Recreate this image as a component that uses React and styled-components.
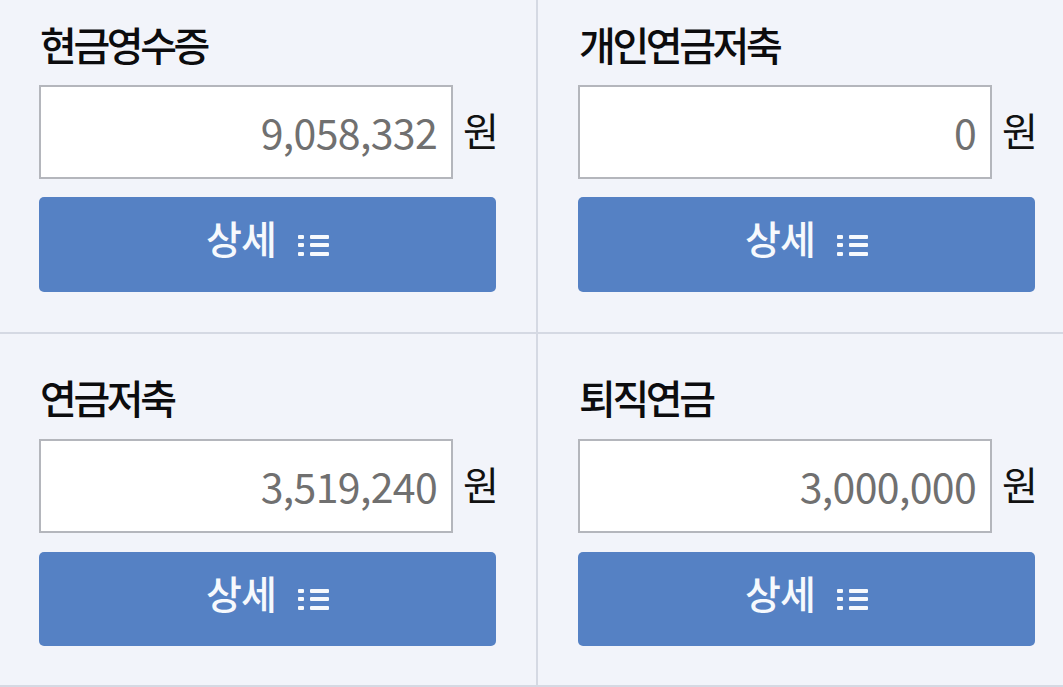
import React from "react";
import styled, { createGlobalStyle } from "styled-components";

const Global = createGlobalStyle`
  html, body { margin: 0; padding: 0; background: #f2f4fa; overflow: hidden; }
  * { box-sizing: border-box; }
`;

const Grid = styled.div`
  width: 1063px;
  height: 687px;
  display: grid;
  grid-template-columns: 538px 525px;
  grid-template-rows: 334px 353px;
  background: #f2f4fa;
  font-family: "Noto Sans CJK KR", "Noto Sans", sans-serif;
`;

const Cell = styled.section`
  display: flex;
  flex-direction: column;
  padding-top: ${p => p.$top}px;
  padding-left: ${p => (p.$right ? 40 : 39)}px;
  border-right: ${p => (p.$right ? "0" : "2px solid #d5d9e3")};
  border-bottom: 2px solid #d5d9e3;
`;

const Label = styled.h3`
  margin: 0 0 ${p => p.$gap}px;
  height: 40px;
  line-height: 38px;
  font-size: 40px;
  font-weight: 500;
  letter-spacing: -3.4px;
  color: #0c0c0e;
  margin-left: 1px;
`;

const Row = styled.div`
  display: flex;
  width: 457px;
  align-items: center;
  justify-content: space-between;
  margin-bottom: ${p => p.$gap}px;
`;

const Field = styled.div`
  width: 414px;
  height: 94px;
  background: #fff;
  border: 2px solid #b4b6bc;
  padding: 0 14px 2px 0;
  display: flex;
  align-items: center;
  justify-content: flex-end;
  font-size: 41px;
  font-weight: 400;
  letter-spacing: -0.65px;
  color: #707070;
`;

const Unit = styled.span`
  font-size: 39px;
  font-weight: 400;
  color: #111;
  line-height: 1;
  margin: -6px -3px 0 0;
`;

const Button = styled.button`
  width: 457px;
  height: ${p => p.$h}px;
  border: 0;
  padding: 0;
  border-radius: 5px;
  background: #5581c4;
  color: #f6f9fd;
  font-family: inherit;
  font-size: 39px;
  font-weight: 500;
  letter-spacing: -1px;
  display: flex;
  align-items: center;
  justify-content: center;
  gap: 22px;
`;

const Caption = styled.span`
  line-height: 1;
  margin-top: -14px;
`;

const ListIcon = () => (
  <svg width="31" height="24" viewBox="0 0 31 24" fill="#f6f9fd" aria-hidden="true">
    <rect x="0" y="2" width="6" height="4" rx="1" />
    <rect x="0" y="10" width="6" height="4" rx="1" />
    <rect x="0" y="19" width="6" height="4" rx="1" />
    <rect x="12" y="2" width="19" height="4" rx="1" />
    <rect x="12" y="10" width="19" height="4" rx="1" />
    <rect x="12" y="19" width="19" height="4" rx="1" />
  </svg>
);

const items = [
  { label: "현금영수증", value: "9,058,332" },
  { label: "개인연금저축", value: "0", right: true },
  { label: "연금저축", value: "3,519,240", lower: true },
  { label: "퇴직연금", value: "3,000,000", right: true, lower: true },
];

export default function App() {
  return (
    <>
      <Global />
      <Grid>
        {items.map(it => (
          <Cell key={it.label} $right={it.right} $top={it.lower ? 44 : 25}>
            <Label $gap={it.lower ? 21 : 20}>{it.label}</Label>
            <Row $gap={it.lower ? 19 : 18}>
              <Field>{it.value}</Field>
              <Unit>원</Unit>
            </Row>
            <Button $h={it.lower ? 94 : 95}>
              <Caption>상세</Caption>
              <ListIcon />
            </Button>
          </Cell>
        ))}
      </Grid>
    </>
  );
}
